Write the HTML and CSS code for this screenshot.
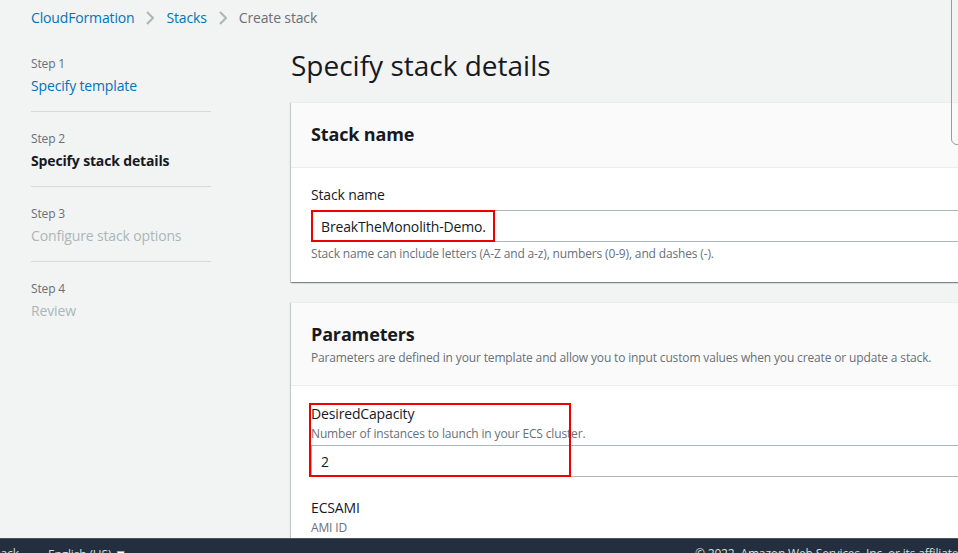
FILE: index.html
```html
<!DOCTYPE html>
<html lang="en">
<head>
<meta charset="utf-8">
<title>Create stack</title>
<link rel="stylesheet" href="styles.css">
</head>
<body>
<div class="page">
  <nav class="breadcrumb">
    <a class="crumb-link">CloudFormation</a>
    <svg class="chev" viewBox="0 0 8 14" width="8" height="14"><path d="M1 1 L7 7 L1 13" fill="none" stroke="#aab7b8" stroke-width="2"/></svg>
    <a class="crumb-link">Stacks</a>
    <svg class="chev" viewBox="0 0 8 14" width="8" height="14"><path d="M1 1 L7 7 L1 13" fill="none" stroke="#aab7b8" stroke-width="2"/></svg>
    <span class="crumb-current">Create stack</span>
  </nav>
  <div class="layout">
    <ol class="steps">
      <li class="step">
        <span class="step-num">Step 1</span>
        <a class="step-title link">Specify template</a>
      </li>
      <li class="step">
        <span class="step-num">Step 2</span>
        <span class="step-title active">Specify stack details</span>
      </li>
      <li class="step">
        <span class="step-num">Step 3</span>
        <span class="step-title disabled">Configure stack options</span>
      </li>
      <li class="step last">
        <span class="step-num">Step 4</span>
        <span class="step-title disabled">Review</span>
      </li>
    </ol>
    <main class="main">
      <h1 class="page-title">Specify stack details</h1>
      <section class="card">
        <header class="card-header">
          <h2 class="card-title">Stack name</h2>
        </header>
        <div class="card-body">
          <div class="field">
            <label class="field-label">Stack name</label>
            <div class="input"><span class="input-text">BreakTheMonolith-Demo.</span></div>
            <span class="annot annot-name"></span>
            <p class="field-hint">Stack name can include letters (A-Z and a-z), numbers (0-9), and dashes (-).</p>
          </div>
        </div>
      </section>
      <section class="card">
        <header class="card-header">
          <h2 class="card-title">Parameters</h2>
          <p class="card-desc">Parameters are defined in your template and allow you to input custom values when you create or update a stack.</p>
        </header>
        <div class="card-body params">
          <div class="field">
            <label class="field-label">DesiredCapacity</label>
            <p class="field-desc">Number of instances to launch in your ECS cluster.</p>
            <div class="input"><span class="input-text">2</span></div>
            <span class="annot annot-cap"></span>
          </div>
          <div class="field second">
            <label class="field-label">ECSAMI</label>
            <p class="field-desc">AMI ID</p>
          </div>
        </div>
      </section>
    </main>
  </div>
  <span class="side-panel-edge"></span>
  <footer class="footer">
    <span class="foot-item feedback">Feedback</span>
    <span class="foot-item lang">English (US) <span class="caret">▼</span></span>
    <span class="foot-copy">© 2022, Amazon Web Services, Inc. or its affiliates.</span>
  </footer>
</div>
</body>
</html>
```
FILE: styles.css
```css
* { box-sizing: border-box; }
html, body {
  margin: 0;
  padding: 0;
  height: 553px;
  overflow: hidden;
  background: #f2f3f3;
  font-family: "Open Sans", "Noto Sans", sans-serif;
  letter-spacing: -0.15px;
  color: #16191f;
}
.page {
  position: relative;
  height: 553px;
  display: flex;
  flex-direction: column;
  overflow: hidden;
}
.breadcrumb {
  display: flex;
  align-items: center;
  gap: 12px;
  height: 35px;
  padding-left: 31px;
  font-size: 14px;
  flex-shrink: 0;
}
.crumb-link { color: #0073bb; }
.crumb-current { color: #687078; }
.chev { display: block; }

.layout {
  display: flex;
  flex: 1;
  min-height: 0;
}
.steps {
  list-style: none;
  margin: 21px 0 0 31px;
  padding: 0;
  width: 180px;
  flex-shrink: 0;
}
.step {
  display: flex;
  flex-direction: column;
  gap: 4px;
  padding: 19px 0 15px;
  border-bottom: 1px solid #d5dbdb;
}
.step:first-child { padding-top: 0; }
.step.last { border-bottom: none; }
.step-num {
  font-size: 12px;
  line-height: 16px;
  color: #687078;
}
.step-title {
  font-size: 14px;
  line-height: 20px;
}
.step-title.link { color: #0073bb; }
.step-title.active { font-weight: 700; color: #16191f; }
.step-title.disabled { color: #aab7b8; }

.main {
  margin-left: 80px;
  width: 720px;
  flex-shrink: 0;
}
.page-title {
  margin: 12px 0 19px;
  font-size: 28px;
  line-height: 36px;
  font-weight: 400;
  letter-spacing: 0;
  color: #16191f;
}
.card {
  background: #fff;
  box-shadow: 0 1px 1px 0 rgba(0,28,36,.3), 1px 1px 1px 0 rgba(0,28,36,.15), -1px 1px 1px 0 rgba(0,28,36,.15);
  border-top: 1px solid #eaeded;
  margin-bottom: 20px;
}
.card-header {
  background: #fafafa;
  border-bottom: 1px solid #eaeded;
  padding: 20px 20px 22px;
}
.card-title {
  margin: 0;
  font-size: 18px;
  line-height: 22px;
  font-weight: 700;
}
.card-desc {
  margin: 5px 0 -3px;
  font-size: 12px;
  line-height: 16px;
  color: #687078;
}
.card-body {
  padding: 17px 20px 20px;
}
.card-body.params { padding-top: 18px; }
.field {
  position: relative;
  display: flex;
  flex-direction: column;
}
.field.second { margin-top: 21px; }
.field-label {
  font-size: 14px;
  line-height: 20px;
  color: #16191f;
}
.field-desc {
  margin: 2px 0 0;
  font-size: 12px;
  line-height: 16px;
  color: #687078;
}
.input {
  margin-top: 3px;
  height: 32px;
  border: 1px solid #aab7b8;
  border-right: none;
  padding: 0 9px;
  display: flex;
  align-items: center;
  font-size: 14px;
  color: #16191f;
}
.field-label + .input { margin-top: 5px; }
.field-hint {
  margin: 4px 0 0;
  font-size: 12px;
  line-height: 16px;
  color: #687078;
}
.annot {
  position: absolute;
  border: 2px solid #ee0000;
  pointer-events: none;
}
.annot-name {
  left: 0;
  top: 25px;
  width: 184px;
  height: 32px;
}
.annot-cap {
  left: -2px;
  top: -1px;
  width: 262px;
  height: 74px;
}
.side-panel-edge {
  position: absolute;
  left: 951px;
  top: -10px;
  width: 30px;
  height: 155px;
  border: 1px solid #9a9a9a;
  border-radius: 6px;
}
.footer {
  position: absolute;
  left: 0;
  right: 0;
  top: 538px;
  height: 40px;
  background: #232f3e;
  border-top: 1px solid #4a525c;
  display: flex;
  align-items: flex-start;
  padding-top: 7px;
  font-size: 12px;
  line-height: 16px;
  color: #d5dbdb;
}
.feedback { margin-left: -33px; }
.lang { margin-left: 29px; }
.caret { font-size: 13px; color: #fff; }
.foot-copy { margin-left: auto; margin-right: -9px; }
```
